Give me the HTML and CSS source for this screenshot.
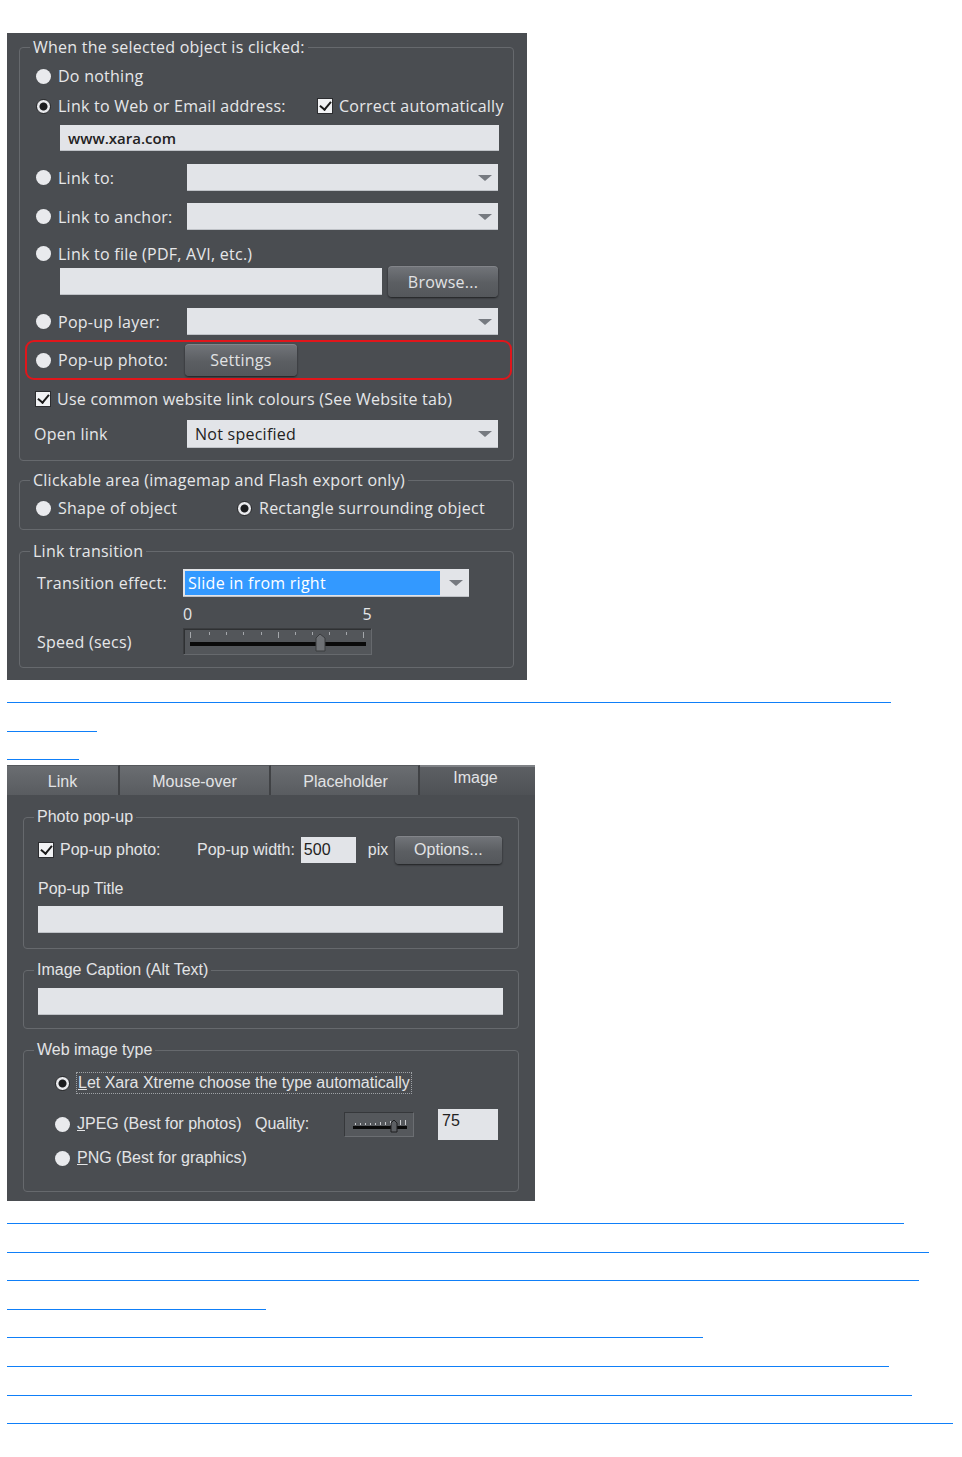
FILE: index.html
```html
<!DOCTYPE html>
<html lang="en">
<head>
    <meta charset="UTF-8">
    <meta name="viewport" content="width=device-width, initial-scale=1.0">
    <title>Web Properties</title>
    <link rel="stylesheet" href="styles.css">
</head>
<body>
    <div class="page">

        <!-- Link tab of the web properties dialog -->
        <div class="panel panel-link">
            <fieldset class="group group-click">
                <legend>When the selected object is clicked:</legend>

                <div class="row row-do">
                    <span class="radio"></span>
                    <span class="label">Do nothing</span>
                </div>

                <div class="row row-web">
                    <span class="radio on"></span>
                    <span class="label web-label">Link to Web or Email address:</span>
                    <span class="check on"></span>
                    <span class="label">Correct automatically</span>
                </div>

                <div class="row row-url">
                    <div class="field url-field">www.xara.com</div>
                </div>

                <div class="row row-drop row-linkto">
                    <span class="radio"></span>
                    <span class="label col-label">Link to:</span>
                    <div class="field drop"><span class="arrow"></span></div>
                </div>

                <div class="row row-drop row-anchor">
                    <span class="radio"></span>
                    <span class="label col-label">Link to anchor:</span>
                    <div class="field drop"><span class="arrow"></span></div>
                </div>

                <div class="row row-file">
                    <span class="radio"></span>
                    <span class="label">Link to file (PDF, AVI, etc.)</span>
                </div>

                <div class="row row-browse">
                    <div class="field file-field"></div>
                    <button class="btn browse">Browse...</button>
                </div>

                <div class="row row-drop row-layer">
                    <span class="radio"></span>
                    <span class="label col-label">Pop-up layer:</span>
                    <div class="field drop"><span class="arrow"></span></div>
                </div>

                <div class="row row-photo">
                    <span class="radio"></span>
                    <span class="label photo-label">Pop-up photo:</span>
                    <button class="btn settings">Settings</button>
                </div>

                <div class="row row-colours">
                    <span class="check on"></span>
                    <span class="label">Use common website link colours (See Website tab)</span>
                </div>

                <div class="row row-drop row-open">
                    <span class="label open-label">Open link</span>
                    <div class="field drop">Not specified<span class="arrow"></span></div>
                </div>
            </fieldset>

            <fieldset class="group group-area">
                <legend>Clickable area (imagemap and Flash export only)</legend>
                <div class="row row-area">
                    <span class="radio"></span>
                    <span class="label shape-label">Shape of object</span>
                    <span class="radio on"></span>
                    <span class="label">Rectangle surrounding object</span>
                </div>
            </fieldset>

            <fieldset class="group group-trans">
                <legend>Link transition</legend>
                <div class="row row-effect">
                    <span class="label trans-label">Transition effect:</span>
                    <div class="field drop effect-drop">
                        <span class="selected">Slide in from right</span>
                        <span class="arrow"></span>
                    </div>
                </div>
                <div class="row row-scale">
                    <span class="scale-num">0</span>
                    <span class="scale-num">5</span>
                </div>
                <div class="row row-speed">
                    <span class="label trans-label">Speed (secs)</span>
                    <div class="slider">
                        <svg width="189" height="27" viewBox="0 0 189 27">
                            <g stroke="#a3a6aa" stroke-width="1">
                                <line x1="6.5" y1="3" x2="6.5" y2="9"/>
                                <line x1="25.5" y1="3" x2="25.5" y2="6"/>
                                <line x1="42.5" y1="3" x2="42.5" y2="6"/>
                                <line x1="59.5" y1="3" x2="59.5" y2="6"/>
                                <line x1="77.5" y1="3" x2="77.5" y2="6"/>
                                <line x1="94.5" y1="3" x2="94.5" y2="9"/>
                                <line x1="111.5" y1="3" x2="111.5" y2="6"/>
                                <line x1="128.5" y1="3" x2="128.5" y2="6"/>
                                <line x1="145.5" y1="3" x2="145.5" y2="6"/>
                                <line x1="162.5" y1="3" x2="162.5" y2="6"/>
                                <line x1="179.5" y1="3" x2="179.5" y2="9"/>
                            </g>
                            <rect x="6" y="13" width="176" height="4" fill="#0a0a0a"/>
                            <path d="M132 22 V9 L136 5 L141 9 V22 Z" fill="#6e7175" stroke="#3a3c3f"/>
                        </svg>
                    </div>
                </div>
            </fieldset>
        </div>

        <div class="lnk lnk-first" style="width: 884px"></div>
        <div class="lnk lnk-tall" style="width: 90px"></div>
        <div class="lnk" style="width: 72px"></div>

        <!-- Image tab of the web properties dialog -->
        <div class="panel panel-image">
            <div class="tabs">
                <div class="tab tab-link">Link</div>
                <div class="tab tab-mouse">Mouse-over</div>
                <div class="tab tab-place">Placeholder</div>
                <div class="tab tab-image active">Image</div>
            </div>

            <div class="tab-body">
                <fieldset class="group group-popup">
                    <legend>Photo pop-up</legend>
                    <div class="row row-popup">
                        <span class="check on"></span>
                        <span class="label popup-label">Pop-up photo:</span>
                        <span class="label">Pop-up width:</span>
                        <div class="field width-field">500</div>
                        <span class="label pix">pix</span>
                        <button class="btn options">Options...</button>
                    </div>
                    <div class="row row-title">
                        <span class="label">Pop-up Title</span>
                    </div>
                    <div class="field wide-field"></div>
                </fieldset>

                <fieldset class="group group-caption">
                    <legend>Image Caption (Alt Text)</legend>
                    <div class="field wide-field"></div>
                </fieldset>

                <fieldset class="group group-type">
                    <legend>Web image type</legend>
                    <div class="row row-auto">
                        <span class="radio on"></span>
                        <span class="label focus"><u>L</u>et Xara Xtreme choose the type automatically</span>
                    </div>
                    <div class="row row-jpeg">
                        <span class="radio"></span>
                        <span class="label jpeg-label"><u>J</u>PEG (Best for photos)</span>
                        <span class="label quality-label">Quality:</span>
                        <div class="mini-slider">
                            <svg width="70" height="25" viewBox="0 0 70 25">
                                <g stroke="#c8cacd" stroke-width="1">
                                    <line x1="10.5" y1="10" x2="10.5" y2="12"/>
                                    <line x1="15.5" y1="10" x2="15.5" y2="12"/>
                                    <line x1="20.5" y1="10" x2="20.5" y2="12"/>
                                    <line x1="25.5" y1="10" x2="25.5" y2="12"/>
                                    <line x1="30.5" y1="10" x2="30.5" y2="12"/>
                                    <line x1="35.5" y1="9" x2="35.5" y2="12"/>
                                    <line x1="40.5" y1="9" x2="40.5" y2="12"/>
                                    <line x1="45.5" y1="8" x2="45.5" y2="12"/>
                                    <line x1="55.5" y1="7" x2="55.5" y2="12"/>
                                    <line x1="60.5" y1="7" x2="60.5" y2="12"/>
                                </g>
                                <rect x="8" y="13" width="54" height="3" fill="#0a0a0a"/>
                                <path d="M46 19 V10 L49 7 L52 10 V19 Z" fill="#5c5f63" stroke="#1e1f21"/>
                            </svg>
                        </div>
                        <div class="field quality-field">75</div>
                    </div>
                    <div class="row row-png">
                        <span class="radio"></span>
                        <span class="label"><u>P</u>NG (Best for graphics)</span>
                    </div>
                </fieldset>
            </div>
        </div>

        <div class="lnk lnk-second" style="width: 897px"></div>
        <div class="lnk lnk-low" style="width: 922px"></div>
        <div class="lnk lnk-low" style="width: 912px"></div>
        <div class="lnk lnk-low" style="width: 259px"></div>
        <div class="lnk lnk-low" style="width: 696px"></div>
        <div class="lnk lnk-low" style="width: 882px"></div>
        <div class="lnk lnk-low" style="width: 905px"></div>
        <div class="lnk lnk-low" style="width: 946px"></div>
    </div>
</body>
</html>
```

FILE: styles.css
```css
* {
    margin: 0;
    padding: 0;
    box-sizing: border-box;
}

body {
    background: #fff;
    font-family: "Open Sans", "Noto Sans", sans-serif;
}

.page {
    padding: 33px 0 0 7px;
}

/* dialog panels */

.panel {
    background: #4a4d51;
    color: #e6e7e9;
}

.panel-link {
    width: 520px;
    height: 647px;
    padding: 4px 13px 0 12px;
    font-size: 16px;
    letter-spacing: 0.25px;
}

.group {
    min-width: 0;
    border: 1px solid #66696d;
    border-radius: 4px;
    padding: 0 15px 0 16px;
}

.group legend {
    margin-left: -6px;
    padding: 0 3px;
    line-height: 20px;
}

.row {
    display: flex;
    align-items: center;
}

.label {
    white-space: nowrap;
    line-height: 20px;
}

/* radio buttons and checkboxes */

.radio {
    width: 15px;
    height: 15px;
    border-radius: 50%;
    background: #e9eaed;
    flex-shrink: 0;
    margin-right: 7px;
}

.radio.on {
    background: radial-gradient(circle, #1b1c1e 0 3.5px, #e9eaed 4.5px);
    border: 1px solid #2a2b2d;
}

.check {
    width: 16px;
    height: 16px;
    flex-shrink: 0;
    background: #f1f2f4;
    border: 1px solid #2c2d30;
    margin-right: 6px;
    position: relative;
}

.check.on::after {
    content: "";
    position: absolute;
    left: 4px;
    top: 0px;
    width: 5px;
    height: 9px;
    border: solid #1a1a1a;
    border-width: 0 2.5px 2.5px 0;
    transform: rotate(40deg);
}

/* text fields and dropdowns */

.field {
    background: #e2e4e8;
    color: #222;
    border-bottom: 1px solid #bfc2c7;
    display: flex;
    align-items: center;
    position: relative;
    flex-shrink: 0;
}

.drop {
    width: 311px;
    height: 27px;
    padding-left: 8px;
    margin-left: auto;
}

.arrow {
    position: absolute;
    right: 6px;
    top: 11px;
    width: 0;
    height: 0;
    border-left: 7px solid transparent;
    border-right: 7px solid transparent;
    border-top: 6px solid #767a80;
}

/* buttons */

.btn {
    font-family: inherit;
    font-size: inherit;
    letter-spacing: inherit;
    color: #e1e2e4;
    border: none;
    border-radius: 4px;
    background: linear-gradient(#72757a, #5b5e62 55%, #54575b);
    box-shadow: 0 1px 2px rgba(0,0,0,0.6), inset 0 1px 0 rgba(255,255,255,0.12);
    flex-shrink: 0;
}

/* link tab rows */

.row-do {
    height: 30px;
    margin-top: 4px;
}

.row-web {
    height: 30px;
}

.web-label {
    width: 259px;
    flex-shrink: 0;
}

.row-web .check {
    margin-right: 6px;
}

.row-url {
    margin-top: 4px;
    padding-left: 24px;
}

.url-field {
    width: 439px;
    height: 26px;
    padding-left: 8px;
    font-weight: 600;
    font-size: 15px;
    letter-spacing: 0;
}

.row-linkto {
    margin-top: 13px;
}

.row-anchor {
    margin-top: 12px;
}

.row-file {
    height: 25px;
    margin-top: 11px;
}

.row-browse {
    height: 31px;
    padding-left: 24px;
    justify-content: space-between;
}

.file-field {
    width: 322px;
    height: 27px;
}

.browse {
    width: 110px;
    height: 31px;
}

.row-layer {
    margin-top: 11px;
}

.row-photo {
    height: 40px;
    margin: 5px -14px 0 -11px;
    padding-left: 9px;
    border: 2px solid #e0161b;
    border-radius: 9px;
}

.photo-label {
    width: 127px;
}

.settings {
    width: 112px;
    height: 32px;
}

.row-colours {
    height: 24px;
    margin-top: 7px;
}

.row-colours .check {
    margin-left: -1px;
    margin-right: 6px;
}

.row-open {
    margin-top: 9px;
}

.row-open .drop {
    height: 28px;
}

.open-label {
    margin-left: -2px;
}

.group-click {
    height: 424px;
}

/* clickable area group */

.group-area {
    margin-top: 9px;
    height: 60px;
}

.row-area {
    height: 28px;
    margin-top: 4px;
}

.shape-label {
    width: 179px;
}

/* link transition group */

.group-trans {
    margin-top: 11px;
    height: 127px;
    padding-left: 17px;
}

.group-trans legend {
    margin-left: -7px;
}

.row-effect {
    margin-top: 8px;
}

.trans-label {
    width: 146px;
}

.effect-drop {
    width: 286px;
    height: 28px;
    margin-left: 0;
    padding: 2px;
}

.selected {
    background: #3399ff;
    color: #fff;
    width: 255px;
    height: 24px;
    line-height: 24px;
    padding-left: 3px;
}

.row-scale {
    height: 20px;
    margin-top: 7px;
    padding-left: 146px;
    width: 335px;
    justify-content: space-between;
}

.row-speed {
    margin-top: 4px;
}

.slider {
    width: 189px;
    height: 27px;
    background: #53565a;
    border: 1px solid #3b3d40;
    border-right-color: #66696d;
    border-bottom-color: #66696d;
    box-shadow: inset 1px 1px 0 #2f3133;
}

.slider svg,
.mini-slider svg {
    display: block;
}

/* blue link underlines */

.lnk {
    height: 28px;
    border-bottom: 1px solid #0f7ff8;
}

.lnk-first {
    height: 23px;
}

.lnk-tall {
    height: 29px;
}

.lnk + .panel-image {
    margin-top: 5px;
}

.lnk-second {
    height: 23px;
}

.lnk-low {
    height: 28.6px;
}

/* image tab */

.panel-image {
    width: 528px;
    height: 436px;
    font-family: "Liberation Sans", Arial, sans-serif;
    font-size: 16px;
    color: #e3e4e6;
}

.tabs {
    display: flex;
    height: 30px;
    background: #4a4d51;
}

.tab {
    height: 30px;
    line-height: 30px;
    padding-top: 1px;
    text-align: center;
    color: #e2e3e5;
    background: linear-gradient(#6a6d71, #595c60);
    border-right: 2px solid #404245;
    border-top: 1px solid #55585c;
}

.tab-link {
    width: 113px;
}

.tab-mouse {
    width: 151px;
}

.tab-place {
    width: 149px;
    padding-left: 2px;
}

.tab.active {
    width: 115px;
    border: none;
    border-top: 2px solid #7f8286;
    background: linear-gradient(#5c5f63, #4e5155);
    line-height: 22px;
    padding-top: 0;
    padding-right: 4px;
}

.tab-body {
    padding: 12px 16px 0 16px;
}

.panel-image .group {
    padding: 0 15px 0 14px;
}

.panel-image .group legend {
    margin-left: -4px;
    padding: 0 3px;
}

.group-popup {
    height: 142px;
}

.row-popup {
    height: 28px;
    margin-top: 9px;
}

.popup-label {
    width: 137px;
}

.width-field {
    width: 55px;
    height: 26px;
    margin-left: 6px;
    padding-left: 3px;
    border: none;
}

.pix {
    margin-left: 12px;
    width: 27px;
}

.options {
    width: 107px;
    height: 28px;
}

.row-title {
    height: 20px;
    margin-top: 15px;
}

.wide-field {
    width: 465px;
    height: 27px;
    margin-top: 7px;
}

.group-caption {
    margin-top: 11px;
    height: 69px;
}

.group-caption .wide-field {
    margin-top: 8px;
}

.panel-image .group-type {
    margin-top: 11px;
    height: 152px;
    padding-left: 31px;
}

.panel-image .group-type legend {
    margin-left: -21px;
}

.row-auto {
    height: 24px;
    margin-top: 11px;
}

.focus {
    border: 1px dotted #9fa2a6;
    padding: 0 1px;
    margin-left: -1px;
}

.row-jpeg {
    height: 30px;
    margin-top: 14px;
}

.jpeg-label {
    width: 178px;
}

.quality-label {
    width: 89px;
}

.mini-slider {
    width: 70px;
    height: 25px;
    background: #55585c;
    border: 1px solid #36383b;
    border-right-color: #6b6e72;
    border-bottom-color: #6b6e72;
}

.quality-field {
    width: 60px;
    height: 31px;
    margin-left: 24px;
    padding-left: 4px;
    align-items: flex-start;
    padding-top: 3px;
    border: none;
}

.row-png {
    height: 24px;
    margin-top: 7px;
}
```
